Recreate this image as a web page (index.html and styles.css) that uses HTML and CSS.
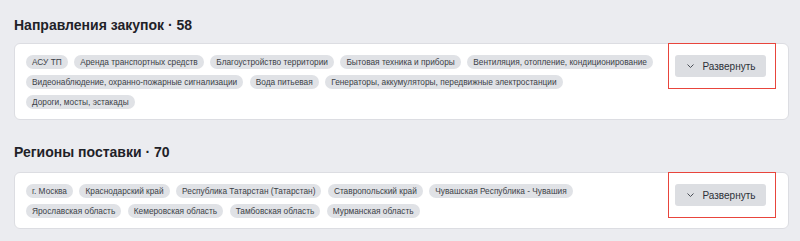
FILE: index.html
```html
<!DOCTYPE html>
<html lang="ru">
<head>
    <meta charset="UTF-8">
    <meta name="viewport" content="width=device-width, initial-scale=1.0">
    <title>Закупки</title>
    <link rel="stylesheet" href="styles.css">
</head>
<body>
    <div class="page">
        <section class="block">
            <h2 class="block-title">Направления закупок · 58</h2>
            <div class="card">
                <div class="chips">
                    <span class="chip">АСУ ТП</span>
                    <span class="chip">Аренда транспортных средств</span>
                    <span class="chip">Благоустройство территории</span>
                    <span class="chip">Бытовая техника и приборы</span>
                    <span class="chip">Вентиляция, отопление, кондиционирование</span>
                    <span class="chip">Видеонаблюдение, охранно-пожарные сигнализации</span>
                    <span class="chip">Вода питьевая</span>
                    <span class="chip">Генераторы, аккумуляторы, передвижные электростанции</span>
                    <span class="chip">Дороги, мосты, эстакады</span>
                </div>
                <div class="toggle-wrap">
                    <button class="toggle">
                        <svg width="7" height="4" viewBox="0 0 7 4"><path d="M0.5 0.5l3 3 3-3" fill="none" stroke="#4a4e56" stroke-width="1"/></svg>
                        Развернуть
                    </button>
                </div>
            </div>
        </section>

        <section class="block">
            <h2 class="block-title">Регионы поставки · 70</h2>
            <div class="card">
                <div class="chips">
                    <span class="chip">г. Москва</span>
                    <span class="chip">Краснодарский край</span>
                    <span class="chip">Республика Татарстан (Татарстан)</span>
                    <span class="chip">Ставропольский край</span>
                    <span class="chip">Чувашская Республика - Чувашия</span>
                    <span class="chip">Ярославская область</span>
                    <span class="chip">Кемеровская область</span>
                    <span class="chip">Тамбовская область</span>
                    <span class="chip">Мурманская область</span>
                </div>
                <div class="toggle-wrap">
                    <button class="toggle">
                        <svg width="7" height="4" viewBox="0 0 7 4"><path d="M0.5 0.5l3 3 3-3" fill="none" stroke="#4a4e56" stroke-width="1"/></svg>
                        Развернуть
                    </button>
                </div>
            </div>
        </section>
    </div>
</body>
</html>
```

FILE: styles.css
```css
body {
    margin: 0;
    background-color: #ebecf0;
    font-family: 'Liberation Sans', Arial, sans-serif;
    color: #1f2228;
}
.page {
    padding: 0 11px 0 14px;
}
.block-title {
    margin: 0;
    font-size: 14px;
    font-weight: 700;
    line-height: 16px;
}
.block:first-child .block-title {
    padding: 17px 0 10px;
}
.block + .block .block-title {
    padding: 24px 0 12px;
}
.card {
    display: flex;
    align-items: flex-start;
    background-color: #fff;
    border: 1px solid #dcdde2;
    border-radius: 6px;
    padding: 11px 22px 10px 11px;
}
.chips {
    flex: 1;
    display: flex;
    flex-wrap: wrap;
    gap: 6px 6.5px;
    padding-right: 16px;
}
.chip {
    display: inline-block;
    height: 14px;
    line-height: 14px;
    padding: 0 6px;
    border-radius: 7px;
    background-color: #e0e2e6;
    color: #3b3f46;
    font-size: 8.3px;
    white-space: nowrap;
}
.toggle-wrap {
    position: relative;
}
.toggle-wrap::after {
    content: '';
    position: absolute;
    top: -12px;
    bottom: -12px;
    left: -7px;
    right: -10px;
    border: 1.5px solid #e8453c;
    pointer-events: none;
}
.toggle {
    display: flex;
    align-items: center;
    justify-content: center;
    gap: 8px;
    width: 91px;
    height: 22px;
    border: none;
    border-radius: 3px;
    background-color: #dcdee2;
    color: #2c3037;
    font-family: inherit;
    font-size: 10px;
    padding: 0 0 0 2px;
    cursor: pointer;
}
```
